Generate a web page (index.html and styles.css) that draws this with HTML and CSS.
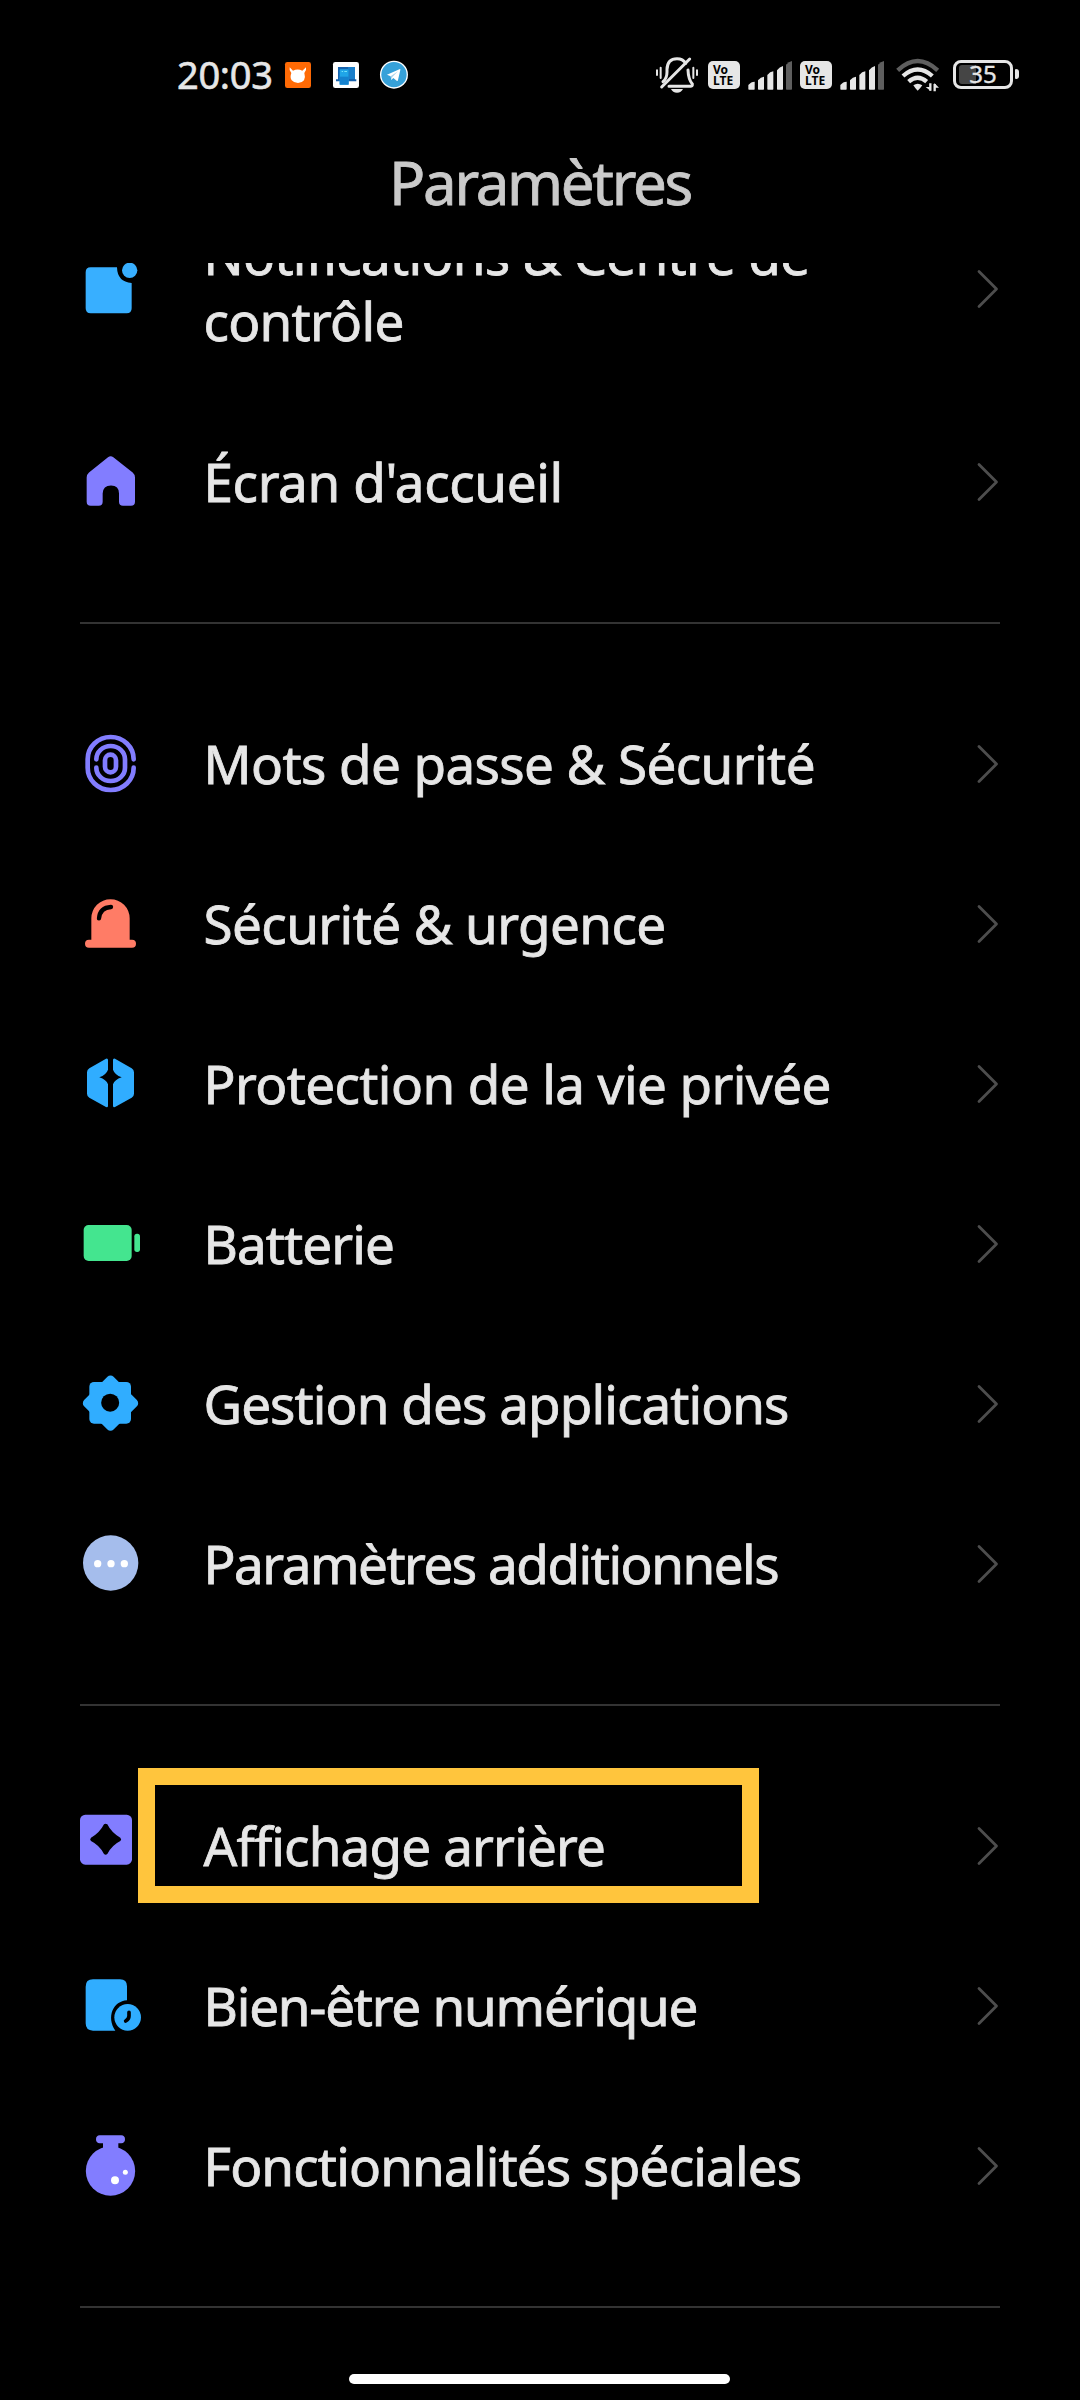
FILE: index.html
```html
<!DOCTYPE html>
<html lang="fr">
<head>
<meta charset="utf-8">
<title>Paramètres</title>
<link rel="stylesheet" href="styles.css">
</head>
<body>
<svg width="0" height="0" class="defs">
  <defs>
    <symbol id="chevron" viewBox="0 0 22 40"><path d="M2 2.500L19.500 20L2 37.500" fill="none" stroke="#4d4d4d" stroke-width="2.800" stroke-linecap="round" stroke-linejoin="round"/></symbol>
    <symbol id="signal" viewBox="318 0 138 210">
      <g fill="#e6e6e6">
        <path d="M322 147v-12q8-10 19-10v22q0 2-2 2h-15q-2 0-2-2z"/>
        <path d="M351 147v-26q8-10 18-11v37q0 2-2 2h-14q-2 0-2-2z"/>
        <path d="M379 147v-42q8-10 18-11v53q0 2-2 2h-14q-2 0-2-2z"/>
        <path d="M408 147v-56q8-11 18-13v69q0 2-2 2h-14q-2 0-2-2z"/>
      </g>
      <path d="M435 147v-73q8-9 18-11v84q0 2-2 2h-14q-2 0-2-2z" fill="#5e5e5e"/>
    </symbol>
  </defs>
</svg>
<div class="screen">
  <div class="status">
    <span class="time">20:03</span>
    <svg class="apps" viewBox="372 0 376 210">
      <rect x="375" y="66" width="78" height="78" rx="7" fill="#ff6a05"/>
      <path d="M389 82l10 10q14-7 28 0l11-10v8l-5 9q4 12-1 22q-6 8-18 8t-19-8q-6-9-1-22l-5-9z" fill="#fff"/>
      <rect x="519" y="66" width="78" height="78" rx="7" fill="#fff"/>
      <path d="M534 81h51v37h4v6h-61v-6h6z" fill="#1762ad"/>
      <path d="M564 81h21v36h-18z" fill="#1b7fcb"/>
      <rect x="539" y="88" width="27" height="46" rx="2" fill="#20a5e8"/>
      <path d="M539 110h27v24h-27z" fill="#1582cf"/>
      <path d="M545 93h4v3h-4zM553 93h8v3h-8z" fill="#75e4fa"/>
      <circle cx="702" cy="104" r="42" fill="#fff"/>
      <circle cx="702" cy="104" r="38" fill="#36a1d9"/>
      <path d="M681 104l39-17q2 0 1 3l-7 31q-1 3-4 1l-10-8l-6 6l-2-11z" fill="#fff"/>
      <path d="M692 109l22-15l-17 17l-2 7z" fill="#a8d3ea"/>
    </svg>
    <div class="sys">
      <svg class="bell" viewBox="42 0 132 210" fill="none" stroke="#e6e6e6" stroke-width="9" stroke-linecap="round">
        <path d="M66 125Q78 115 78 96V88Q79 56 108 56Q126 56 134 70M141 90Q142 118 154 132Q155 139 148 139H84" stroke-linejoin="round"/>
        <path d="M62 141L146 57"/>
        <path d="M48 91v14M59 83v31M168 91v14M157 83v31" stroke-width="6"/>
        <path d="M90 147h36q-5 11-18 11t-18-11z" fill="#e6e6e6" stroke="none"/>
      </svg>
      <span class="volte"><b>Vo</b><b>LTE</b></span>
      <svg class="bars"><use href="#signal"/></svg>
      <span class="volte second"><b>Vo</b><b>LTE</b></span>
      <svg class="bars"><use href="#signal"/></svg>
      <svg class="wifi" viewBox="765 0 135 210" fill="none" stroke="#e6e6e6" stroke-width="13">
        <path d="M773 91Q833 35 893 91" stroke="#5e5e5e"/>
        <path d="M789 108Q833 69 877 108"/>
        <path d="M806 125Q833 101 860 125"/>
        <path d="M820 136Q833 127 847 136Q841 145 833 152Q826 146 820 136z" fill="#e6e6e6" stroke="none"/>
        <path d="M871 130v22M884 132v22" stroke-width="7"/>
        <path d="M857 141h15v12zM883 129v14h14z" fill="#e6e6e6" stroke="none"/>
      </svg>
      <span class="battery"><i class="level"></i><span class="pct">35</span></span><i class="cap"></i>
    </div>
  </div>
  <header class="header"><h1>Paramètres</h1></header>
  <main class="list">
    <section class="group">
      <div class="row tall">
        <svg class="icon" viewBox="54 51 192 192" fill="#38afff"><path d="M92 82H171Q172 126 215 129V205Q215 220 200 220H92Q77 220 77 205V97Q77 82 92 82z"/><circle cx="209" cy="91" r="23"/></svg>
        <span class="label l-notif">Notifications &amp; Centre de<br>contrôle</span><svg class="chev"><use href="#chevron"/></svg>
      </div>
      <div class="row">
        <svg class="icon" viewBox="54 631.500 192 192" fill="#827dff"><path d="M144 653Q152 647 160 653L218 699Q225 705 225 714V787Q225 799 213 799H189Q177 799 177 787V762Q177 738 153 738T128 762V787Q128 799 116 799H92Q80 799 80 787V714Q80 705 87 699z"/></svg>
        <span class="label l-ecran">Écran d'accueil</span><svg class="chev"><use href="#chevron"/></svg>
      </div>
    </section>
    <hr>
    <section class="group">
      <div class="row">
        <svg class="icon" viewBox="54 97 192 192" fill="none" stroke="#827dff" stroke-width="14" stroke-linecap="round"><path d="M221 179A69 67 0 0 0 83 179V204A69 67 0 0 0 221 204"/><path d="M109 179A43 40 0 0 1 195 179V204A43 40 0 0 1 109 204"/><rect x="135" y="165" width="33" height="53" rx="16.500"/></svg>
        <span class="label l-mots">Mots de passe &amp; Sécurité</span><svg class="chev"><use href="#chevron"/></svg>
      </div>
      <div class="row">
        <svg class="icon" viewBox="54 577 192 192"><path d="M94 720V656A57 57 0 0 1 209 656V720H216A12 12 0 0 1 216 744H87A12 12 0 0 1 87 720z" fill="#ff7c66"/><path d="M117 656Q120 624 153 622" fill="none" stroke="#000" stroke-width="13" stroke-linecap="round"/></svg>
        <span class="label l-sec">Sécurité &amp; urgence</span><svg class="chev"><use href="#chevron"/></svg>
      </div>
      <div class="row">
        <svg class="icon" viewBox="54 97 192 192" fill="#30adff"><path d="M138 117Q144 115 144 121V150Q139 165 118 173Q139 180 144 194V258Q144 264 138 262L88 234Q81 230 81 222V158Q81 150 88 146z"/><path d="M165 117Q159 115 159 121V150Q164 165 185 173Q164 180 159 194V258Q159 264 165 262L215 234Q222 230 222 222V158Q222 150 215 146z"/></svg>
        <span class="label l-prot">Protection de la vie privée</span><svg class="chev"><use href="#chevron"/></svg>
      </div>
      <div class="row">
        <svg class="icon" viewBox="54 577 192 192" fill="#44e58f"><rect x="71" y="616" width="144" height="108" rx="15"/><rect x="223" y="642" width="17" height="55" rx="8"/></svg>
        <span class="label l-bat">Batterie</span><svg class="chev"><use href="#chevron"/></svg>
      </div>
      <div class="row">
        <svg class="icon" viewBox="54 97 192 192"><g fill="#30adff"><rect x="88" y="127" width="125" height="125" rx="14"/><rect x="89" y="128" width="125" height="125" rx="13" transform="rotate(45 151.500 190.500)"/></g><circle cx="150.500" cy="189" r="27" fill="#000"/></svg>
        <span class="label l-gest">Gestion des applications</span><svg class="chev"><use href="#chevron"/></svg>
      </div>
      <div class="row">
        <svg class="icon" viewBox="54 577 192 192" fill="#fff"><circle cx="152" cy="670" r="83" fill="#a5bdec"/><circle cx="113" cy="672" r="11"/><circle cx="153" cy="672" r="11"/><circle cx="193" cy="672" r="11"/></svg>
        <span class="label l-par">Paramètres additionnels</span><svg class="chev"><use href="#chevron"/></svg>
      </div>
    </section>
    <hr>
    <section class="group">
      <div class="row marked">
        <svg class="icon" viewBox="54 223 192 192"><rect x="60" y="225" width="156" height="150" rx="16" fill="#827dff"/><path d="M132 254Q137 250 142 254Q155 280 181 294Q186 299 181 304Q155 317 142 343Q137 348 132 343Q119 317 93 304Q88 299 93 294Q119 280 132 254z"/></svg>
        <span class="label l-aff">Affichage arrière</span><svg class="chev"><use href="#chevron"/></svg>
      </div>
      <div class="row">
        <svg class="icon" viewBox="54 73 192 192"><path d="M99 89H180Q201 89 201 110V152C160 154 138 202 166 243H99Q77 243 77 221V111Q77 89 99 89z" fill="#30adff"/><circle cx="203" cy="203" r="40" fill="#30adff"/><path d="M207 188V199Q207 208 197 214" fill="none" stroke="#000" stroke-width="11" stroke-linecap="round"/></svg>
        <span class="label l-bien">Bien-être numérique</span><svg class="chev"><use href="#chevron"/></svg>
      </div>
      <div class="row">
        <svg class="icon" viewBox="54 553 192 192" fill="#827dff"><path d="M119 557H184Q195 558 195 569T184 581H175V600H129V581H119Q108 580 108 569T119 557z"/><circle cx="151.500" cy="664" r="74"/><circle cx="165" cy="692" r="12" fill="#fff"/><circle cx="196" cy="668" r="7.500" fill="#fff"/></svg>
        <span class="label l-fonc">Fonctionnalités spéciales</span><svg class="chev"><use href="#chevron"/></svg>
      </div>
    </section>
    <hr>
  </main>
  <footer class="nav"><i class="pill"></i></footer>
</div>
</body>
</html>
```
FILE: styles.css
```css
*, *::after { box-sizing: border-box; }
body { margin: 0; background: #000; color: #e6e6e6; font-family: "Noto Sans", sans-serif; }
.defs { display: none; }
.screen { width: 1080px; height: 2400px; display: flex; flex-direction: column; overflow: hidden; background: #000; }
.status { height: 110px; padding: 40px 61px 0 177px; display: flex; flex: none; align-items: flex-start; }
.status svg { display: block; height: 70px; flex: none; }
.time { width: 107px; font-size: 38px; line-height: 68px; letter-spacing: -0.3px; white-space: nowrap; -webkit-text-stroke: 0.6px; }
.apps { width: 125.300px; }
.sys { margin-left: auto; display: flex; }
.bell { width: 44px; }
.volte { width: 32px; height: 28px; margin: 21px 7px 0 9px; padding-top: 3px; border-radius: 5px; background: #e6e6e6; color: #000; display: flex; flex-direction: column; }
.volte b { font: 700 12px/11px "Noto Sans", sans-serif; padding-left: 5px; }
.volte.second { margin-left: 7px; }
.bars { width: 46px; }
.wifi { width: 45px; margin-left: 10px; }
.battery { position: relative; width: 60px; height: 29px; margin: 20px 2px 0 13px; border: 3px solid #e6e6e6; border-radius: 8px; text-align: center; }
.level { position: absolute; left: 3px; top: 2px; width: 17px; height: 19px; background: #454545; border-radius: 3px 0 0 3px; }
.pct { position: relative; display: block; font-size: 24px; line-height: 22px; -webkit-text-stroke: 0.4px; }
.cap { width: 4px; height: 10px; margin-top: 29px; border-radius: 1px 3px 3px 1px; background: #e6e6e6; }
.header { height: 153px; flex: none; }
h1 { margin: 0; padding-top: 28px; text-align: center; font-size: 60px; line-height: 88px; font-weight: 400; letter-spacing: -2.300px; color: #cacaca; -webkit-text-stroke: 0.8px; }
.list { height: 2076px; flex: none; overflow: hidden; }
.group { display: flex; flex-direction: column; }
.row { height: 160px; padding: 0 81px 0 78px; display: flex; align-items: center; flex: none; position: relative; }
.row.tall { height: 227px; margin-top: -88px; }
.icon { width: 64px; height: 64px; flex: none; margin-right: 61.500px; }
.label { flex: 1; padding-bottom: 1px; font-size: 53px; line-height: 66px; white-space: nowrap; -webkit-text-stroke: 0.8px; }
.l-notif { letter-spacing: -0.720px; }
.l-ecran { letter-spacing: -0.380px; }
.l-mots, .l-sec, .l-prot { letter-spacing: -0.600px; }
.l-bat, .l-gest { letter-spacing: -0.930px; }
.l-par { letter-spacing: -1.480px; }
.l-aff, .l-fonc { letter-spacing: -0.850px; }
.l-bien { letter-spacing: -1.230px; }
.chev { width: 22px; height: 40px; flex: none; }
hr { height: 2px; margin: 60px 80px; border: 0; background: #333; }
.marked::after { content: ""; position: absolute; left: 138px; top: 2px; width: 621px; height: 135px; border: 17px solid #ffc53d; }
.nav { flex: 1; display: flex; justify-content: center; padding: 35px 1px 0 0; }
.pill { width: 381px; height: 10px; border-radius: 5px; background: #fff; }
```
